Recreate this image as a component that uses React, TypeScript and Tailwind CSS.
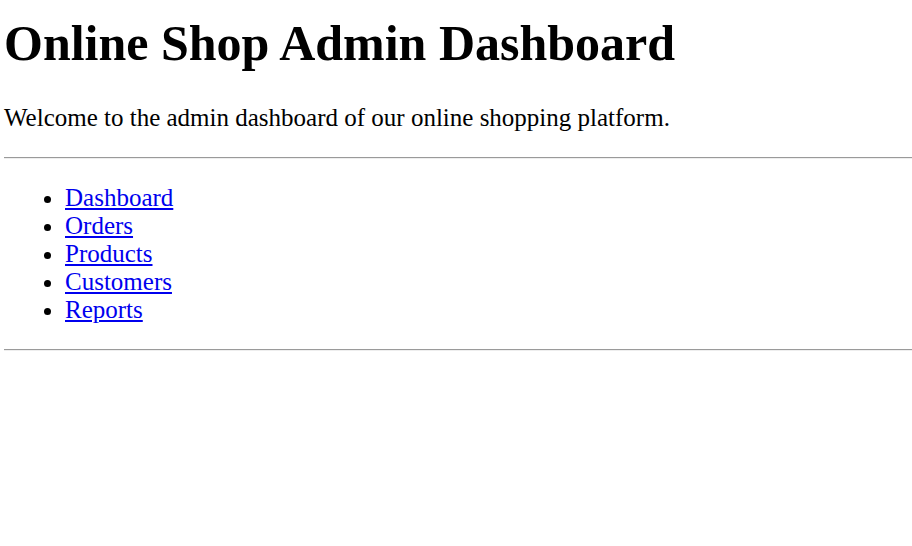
const links = ['Dashboard', 'Orders', 'Products', 'Customers', 'Reports'];

export default function App() {
  return (
    <div className="min-h-screen bg-white pl-[4px] pt-[15px] font-['Liberation_Serif','Times_New_Roman',serif] text-[25px] leading-[28px] text-black">
      {/* Header */}
      <h1 className="mb-[32px] text-[50px] font-bold leading-[57px]">Online Shop Admin Dashboard</h1>
      <p className="mb-[25px]">Welcome to the admin dashboard of our online shopping platform.</p>

      <hr className="border-t border-b border-t-[#9a9a9a] border-b-[#eeeeee]" />

      {/* Nav */}
      <ul className="my-[25px] list-disc pl-[61px]">
        {links.map((label) => (
          <li key={label}>
            <a href="#" className="text-[#0000ee] underline">
              {label}
            </a>
          </li>
        ))}
      </ul>

      <hr className="border-t border-b border-t-[#9a9a9a] border-b-[#eeeeee]" />
    </div>
  );
}
